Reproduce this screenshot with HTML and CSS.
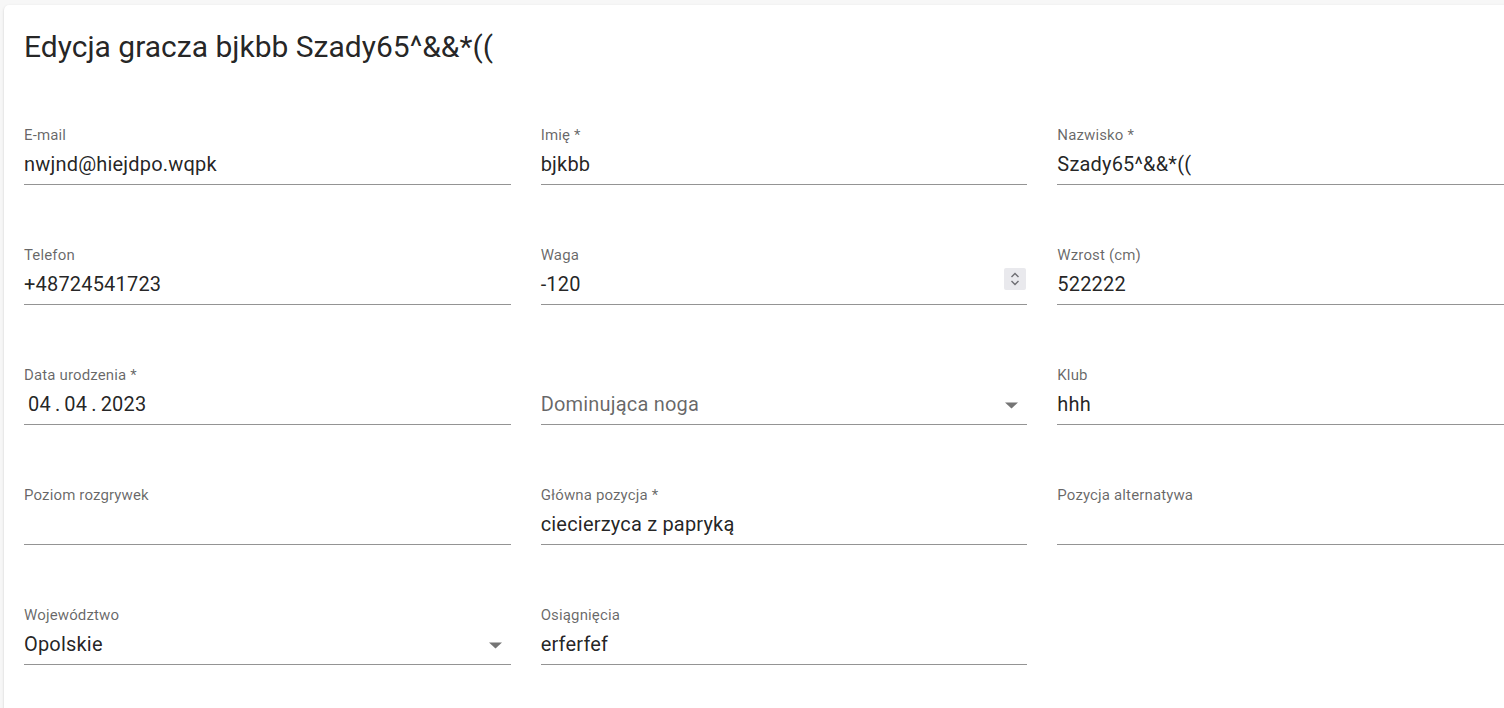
FILE: index.html
```html
<!DOCTYPE html>
<html lang="pl">
<head>
<meta charset="utf-8">
<title>Edycja gracza</title>
<link rel="stylesheet" href="styles.css">
</head>
<body>
<main class="card">
  <h1 class="title">Edycja gracza bjkbb Szady65^&amp;&amp;*((</h1>
  <form class="grid">
    <div class="field">
      <label class="label">E-mail</label>
      <div class="input">nwjnd@hiejdpo.wqpk</div>
    </div>
    <div class="field">
      <label class="label">Imię *</label>
      <div class="input">bjkbb</div>
    </div>
    <div class="field">
      <label class="label">Nazwisko *</label>
      <div class="input">Szady65^&amp;&amp;*((</div>
    </div>

    <div class="field">
      <label class="label">Telefon</label>
      <div class="input">+48724541723</div>
    </div>
    <div class="field">
      <label class="label">Waga</label>
      <div class="input">-120
        <span class="spin">
          <svg width="10" height="18" viewBox="0 0 10 18"><path d="M1.5 7 L5 3.5 L8.5 7 M1.5 11 L5 14.5 L8.5 11" fill="none" stroke="#6e6e73" stroke-width="1.4"/></svg>
        </span>
      </div>
    </div>
    <div class="field">
      <label class="label">Wzrost (cm)</label>
      <div class="input">522222</div>
    </div>

    <div class="field">
      <label class="label">Data urodzenia *</label>
      <div class="input date"><span>04</span><span class="sep">.</span><span>04</span><span class="sep">.</span><span>2023</span></div>
    </div>
    <div class="field">
      <label class="label">&nbsp;</label>
      <div class="input placeholder">Dominująca noga
        <svg class="arrow" width="13" height="7" viewBox="0 0 13 7"><path d="M0 0.4 L6.5 6.6 L13 0.4 Z" fill="#757575"/></svg>
      </div>
    </div>
    <div class="field">
      <label class="label">Klub</label>
      <div class="input">hhh</div>
    </div>

    <div class="field">
      <label class="label">Poziom rozgrywek</label>
      <div class="input"></div>
    </div>
    <div class="field">
      <label class="label">Główna pozycja *</label>
      <div class="input">ciecierzyca z papryką</div>
    </div>
    <div class="field">
      <label class="label">Pozycja alternatywa</label>
      <div class="input"></div>
    </div>

    <div class="field">
      <label class="label">Województwo</label>
      <div class="input">Opolskie
        <svg class="arrow" width="13" height="7" viewBox="0 0 13 7"><path d="M0 0.4 L6.5 6.6 L13 0.4 Z" fill="#757575"/></svg>
      </div>
    </div>
    <div class="field">
      <label class="label">Osiągnięcia</label>
      <div class="input">erferfef</div>
    </div>
  </form>
</main>
</body>
</html>
```
FILE: styles.css
```css
html, body {
  margin: 0;
  padding: 0;
  overflow: hidden;
  background: #f7f7f7;
  font-family: Roboto, "Noto Sans", sans-serif;
}

.card {
  margin: 5px 0 0 4px;
  width: 1560px;
  box-sizing: border-box;
  padding: 24px 20px 60px;
  background: #ffffff;
  border-radius: 5px;
  box-shadow: 0 2px 1px -1px rgba(0,0,0,0.2), 0 1px 1px 0 rgba(0,0,0,0.14), 0 1px 3px 0 rgba(0,0,0,0.12);
}

.title {
  margin: 0;
  font-size: 30px;
  line-height: 36px;
  font-weight: 400;
  color: rgba(0,0,0,0.87);
}

.grid {
  margin-top: 61px;
  display: grid;
  grid-template-columns: repeat(3, 486.67px);
  column-gap: 30px;
  row-gap: 61px;
}

.field {
  display: flex;
  flex-direction: column;
}

.label {
  font-size: 15px;
  line-height: 18px;
  height: 18px;
  letter-spacing: 0.14px;
  color: rgba(0,0,0,0.6);
  white-space: nowrap;
}

.input {
  position: relative;
  margin-top: 8px;
  font-size: 20px;
  line-height: 24px;
  height: 24px;
  padding-bottom: 8px;
  letter-spacing: 0.19px;
  border-bottom: 1px solid rgba(0,0,0,0.42);
  color: rgba(0,0,0,0.87);
  white-space: nowrap;
}

.placeholder {
  color: rgba(0,0,0,0.6);
}

.date {
  padding-left: 4px;
}

.date .sep {
  margin: 0 4px;
}

.arrow {
  position: absolute;
  right: 9px;
  top: 10px;
}

.spin {
  position: absolute;
  right: 1px;
  top: -4px;
  width: 22px;
  height: 22px;
  border-radius: 2px;
  background: #e9e9ed;
  display: flex;
  align-items: center;
  justify-content: center;
}
```
